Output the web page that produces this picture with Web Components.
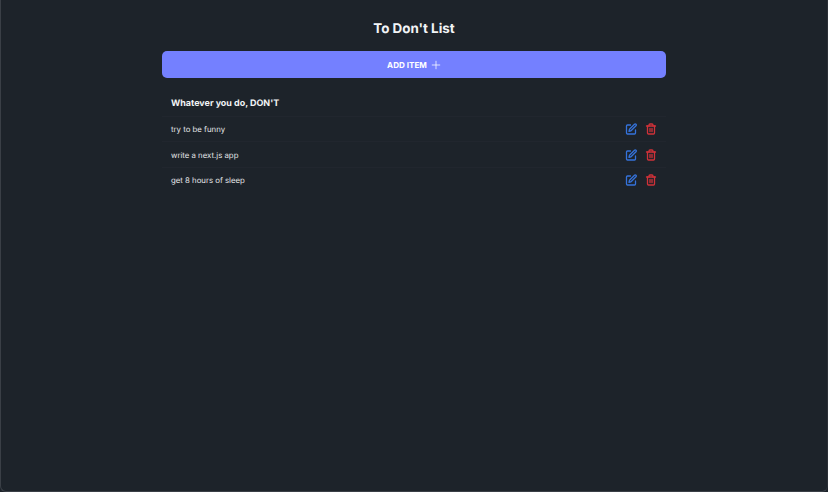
<!DOCTYPE html>
<html>
<head>
<meta charset="utf-8">
<style>
  html, body { margin: 0; height: 100%; background: #1d232a; }
  body { font-family: Inter, "Liberation Sans", sans-serif; overflow: hidden; text-rendering: geometricPrecision; }
</style>
</head>
<body>
<todo-app>
  <todo-item>try to be funny</todo-item>
  <todo-item>write a next.js app</todo-item>
  <todo-item>get 8 hours of sleep</todo-item>
</todo-app>
<script>
class TodoApp extends HTMLElement {
    constructor() {
        super();
        this.attachShadow({ mode: 'open' });
        this.shadowRoot.innerHTML = `
      <style>
        :host {
          display: block;
          box-sizing: border-box;
          height: 492px;
          padding-top: 20px;
          border: 1px solid #3a3f46;
          border-top: 0;
          border-right-color: #2a2f36;
          border-radius: 0 0 6px 6px;
          background: #1d232a;
        }
        .wrap {
          width: 504px;
          margin: 0 auto;
          display: flex;
          flex-direction: column;
        }
        h1 {
          margin: 0 0 12px;
          font-size: 13.4px;
          line-height: 19px;
          font-weight: 700;
          text-align: center;
          color: #f2f4f6;
        }
        button {
          height: 27px;
          border: 0;
          border-radius: 5px;
          padding: 1px 0 0;
          background: #7480ff;
          color: #fff;
          font: 700 8.1px/1 Inter, "Liberation Sans", sans-serif;
          text-rendering: geometricPrecision;
          display: flex;
          align-items: center;
          justify-content: center;
          gap: 4px;
        }
        button svg { width: 10px; height: 10px; margin-top: -1px; }
        h2 {
          margin: 0;
          padding: 19px 9px 5px;
          font-size: 8.95px;
          line-height: 14px;
          font-weight: 700;
          color: #f2f4f6;
        }
      </style>
      <div class="wrap">
        <h1>To Don't List</h1>
        <button>ADD ITEM
          <svg viewBox="0 0 24 24" fill="none" stroke="currentColor" stroke-width="1.8"><path d="M12 2v20M2 12h20"/></svg>
        </button>
        <h2>Whatever you do, DON'T</h2>
        <slot></slot>
      </div>
    `;
    }
}

class TodoItem extends HTMLElement {
    constructor() {
        super();
        this.attachShadow({ mode: 'open' });
        this.shadowRoot.innerHTML = `
      <style>
        :host {
          display: flex;
          align-items: center;
          box-sizing: border-box;
          height: 25.4px;
          padding: 0 9px;
          border-top: 1px solid #21262e;
          font-size: 7.8px;
          color: #e3e5e8;
        }
        .text { flex: 1; }
        .actions { display: flex; gap: 8px; align-items: center; }
        svg { width: 12px; height: 12px; display: block; fill: none; stroke-width: 2.6; stroke-linecap: round; stroke-linejoin: round; }
        .edit { stroke: #3573dc; }
        .del { stroke: #cf3239; }
      </style>
      <span class="text"><slot></slot></span>
      <span class="actions">
        <svg class="edit" viewBox="0 0 24 24"><path d="M11 4H5a2 2 0 0 0-2 2v14a2 2 0 0 0 2 2h14a2 2 0 0 0 2-2v-6"/><path d="M19 2.5a2.1 2.1 0 0 1 3 3L12 15.5l-4 1 1-4z"/></svg>
        <svg class="del" viewBox="0 0 24 24"><path d="M3 6h18"/><path d="M19 6v14a2 2 0 0 1-2 2H7a2 2 0 0 1-2-2V6"/><path d="M8 6V4a2 2 0 0 1 2-2h4a2 2 0 0 1 2 2v2"/><path d="M10 11v6M14 11v6"/></svg>
      </span>
    `;
    }
}

customElements.define('todo-app', TodoApp);
customElements.define('todo-item', TodoItem);
</script>
</body>
</html>
